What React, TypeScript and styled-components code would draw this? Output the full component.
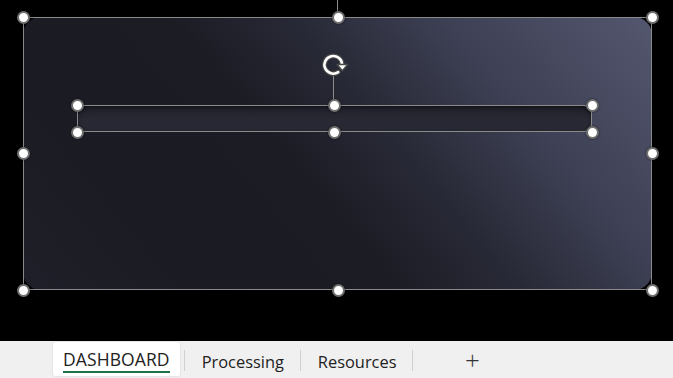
import React from "react";
import styled, { createGlobalStyle } from "styled-components";

const Global = createGlobalStyle`
  html, body { margin: 0; padding: 0; background: #000; }
  body { font-family: "Open Sans", "Noto Sans", sans-serif; }
`;

const Page = styled.div`
  width: 673px;
  height: 378px;
  display: flex;
  flex-direction: column;
  background: #000;
  overflow: hidden;
`;

const Stage = styled.div`
  flex: 1;
  padding: 17px 0 0 23px;
  position: relative;
`;

const TopStem = styled.div`
  position: absolute;
  left: 337px;
  top: 0;
  width: 1px;
  height: 17px;
  background: #8c8c8c;
`;

const Card = styled.div`
  position: relative;
  width: 629px;
  height: 273px;
  border-radius: 18px;
  background: linear-gradient(230deg, #53576f 0%, #3e4155 24%, #282936 42%, #1c1c25 56%, #1b1b24 78%, #1f1f29 100%);
  box-sizing: border-box;
  padding: 88px 0 0 54px;
`;

const Frame = styled.div`
  position: absolute;
  inset: 0;
  border: 1px solid #8a8a8a;
  pointer-events: none;
`;

const Handle = styled.div<{ $x: string; $y: string }>`
  position: absolute;
  left: ${(p) => p.$x};
  top: ${(p) => p.$y};
  width: 9px;
  height: 9px;
  margin: -6.5px 0 0 -6.5px;
  border-radius: 50%;
  background: #fff;
  border: 2px solid #707070;
  box-shadow: 0 0 2px rgba(0, 0, 0, 0.7);
  z-index: 3;
`;

const BarSlot = styled.div`
  position: relative;
  width: 515px;
  height: 27px;
`;

const Bar = styled.div`
  position: absolute;
  inset: 0;
  border-radius: 13px;
  background: linear-gradient(180deg, #1e1f28 0%, #282934 55%, #272832 100%);
  box-shadow: inset 0 2px 4px rgba(0, 0, 0, 0.55), inset 0 -1px 1px rgba(255, 255, 255, 0.05);
`;

const Stem = styled.div`
  position: absolute;
  left: 256px;
  top: -32px;
  width: 1px;
  height: 32px;
  background: #8c8c8c;
`;

const Rotate = styled.div`
  position: absolute;
  left: 243px;
  top: -56px;
  width: 31px;
  height: 31px;
  z-index: 3;
`;

const TabBar = styled.div`
  height: 37px;
  flex: none;
  background: #f0f0f0;
  display: flex;
  align-items: stretch;
  padding-left: 53px;
  font-family: "Open Sans", "Noto Sans", sans-serif;
`;

const Tab = styled.div<{ $active?: boolean }>`
  position: relative;
  display: flex;
  align-items: center;
  justify-content: center;
  box-sizing: border-box;
  font-size: 16.4px;
  color: #222;
  ${(p) =>
    p.$active
      ? `
    background: #fff;
    margin-top: 1px;
    margin-bottom: 2px;
    padding: 0 10px 0 10px;
    border-radius: 2px;
    box-shadow: 0 0 2px rgba(0,0,0,0.15);
    font-size: 17.5px;
    letter-spacing: 0.1px;
    &::after {
      content: "";
      position: absolute;
      left: 10px;
      right: 10px;
      bottom: 3px;
      height: 2px;
      background: #1e7145;
    }
  `
      : `
    padding: 4px 16px 0 17px;
  `}
`;

const Sep = styled.div`
  width: 1px;
  background: #d0d0d0;
  margin: 9px 0 7px 0;
  flex: none;
`;

const Plus = styled.div`
  width: 118px;
  display: flex;
  align-items: center;
  justify-content: center;
  color: #333;
  font-size: 26px;
  font-weight: 300;
`;

const RotateIcon = () => (
  <svg width="31" height="31" viewBox="0 0 28 28">
    <g fill="none" strokeLinecap="round">
      <path d="M16.5 20.9 A8 8 0 1 1 20 14" stroke="#4a4a4a" strokeWidth="4.4" />
      <path d="M16.5 20.9 A8 8 0 1 1 20 14" stroke="#fff" strokeWidth="2.3" />
    </g>
    <path d="M15.5 14 L25 14 L20.2 19.6 Z" fill="#fff" stroke="#4a4a4a" strokeWidth="1.2" strokeLinejoin="round" />
  </svg>
);

export default function App() {
  const outer: [string, string][] = [
    ["0%", "0%"], ["50.2%", "0%"], ["100%", "0%"],
    ["0%", "50%"], ["100%", "50%"],
    ["0%", "100%"], ["50.2%", "100%"], ["100%", "100%"],
  ];
  const inner: [string, string][] = [
    ["0%", "0%"], ["50%", "0%"], ["100%", "0%"],
    ["0%", "100%"], ["50%", "100%"], ["100%", "100%"],
  ];
  return (
    <Page>
      <Global />
      <Stage>
        <TopStem />
        <Card>
          <BarSlot>
            <Bar />
            <Frame />
            <Stem />
            <Rotate>
              <RotateIcon />
            </Rotate>
            {inner.map(([x, y], i) => (
              <Handle key={i} $x={x} $y={y} />
            ))}
          </BarSlot>
          <Frame />
          {outer.map(([x, y], i) => (
            <Handle key={i} $x={x} $y={y} />
          ))}
        </Card>
      </Stage>
      <TabBar>
        <Tab $active>DASHBOARD</Tab>
        <Sep style={{ marginLeft: 4 }} />
        <Tab>Processing</Tab>
        <Sep />
        <Tab>Resources</Tab>
        <Sep />
        <Plus>+</Plus>
      </TabBar>
    </Page>
  );
}
